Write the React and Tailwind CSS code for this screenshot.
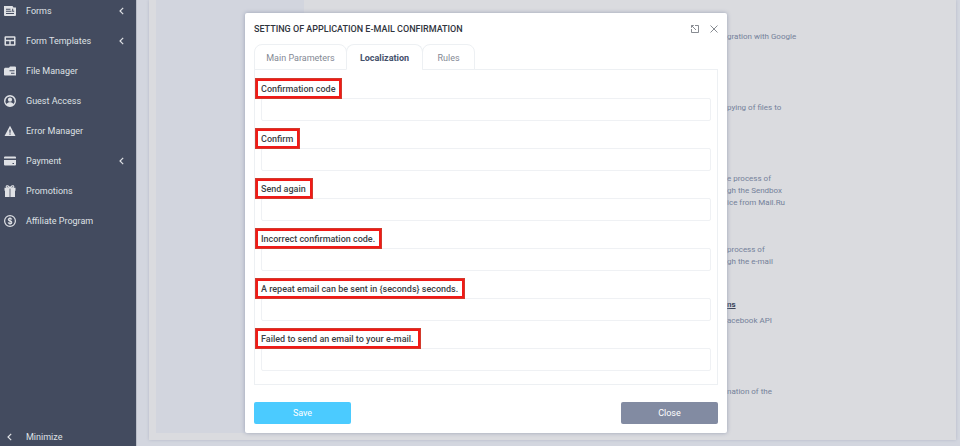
const menuItems = [
  { label: 'Forms', icon: FormsIcon, expandable: true },
  { label: 'Form Templates', icon: TemplatesIcon, expandable: true },
  { label: 'File Manager', icon: FolderIcon },
  { label: 'Guest Access', icon: GuestIcon },
  { label: 'Error Manager', icon: WarningIcon },
  { label: 'Payment', icon: CardIcon, expandable: true },
  { label: 'Promotions', icon: GiftIcon },
  { label: 'Affiliate Program', icon: DollarIcon },
];

const tabs = [
  { label: 'Main Parameters', width: 'w-[93px]' },
  { label: 'Localization', width: 'w-[77px]', active: true },
  { label: 'Rules', width: 'w-[53px]' },
];

const fields = [
  { id: 'confirmation-code', label: 'Confirmation code' },
  { id: 'confirm', label: 'Confirm' },
  { id: 'send-again', label: 'Send again' },
  { id: 'incorrect-code', label: 'Incorrect confirmation code.' },
  { id: 'repeat-email', label: 'A repeat email can be sent in {seconds} seconds.' },
  { id: 'failed-email', label: 'Failed to send an email to your e-mail.' },
];

const integrations = [
  { lines: ['gration with Google'] },
  { lines: ['pying of files to'] },
  { lines: ['e process of', 'gh the Sendbox', 'ice from Mail.Ru'] },
  { lines: ['process of', 'gh the e-mail'] },
  { title: 'ns', lines: ['acebook API'] },
  { lines: ['nation of the'] },
];

function Icon({ children }) {
  return (
    <svg viewBox="0 0 12 12" className="size-3 shrink-0" fill="currentColor" aria-hidden="true">
      {children}
    </svg>
  );
}

function FormsIcon() {
  return (
    <Icon>
      <path
        fillRule="evenodd"
        d="M0 1h8.500l1 1.500H12v7.500a1 1 0 0 1-1 1H1a1 1 0 0 1-1-1zM2 3.800v1h4.500v-1zM2 5.800v1h5.500v-1zM2 8v1h8V8zM8.200 3.800v3h2v-1h-1v-2z"
      />
    </Icon>
  );
}

function TemplatesIcon() {
  return (
    <Icon>
      <path
        fillRule="evenodd"
        d="M1.500 1.300h9a1 1 0 0 1 1 1v7.500a1 1 0 0 1-1 1h-9a1 1 0 0 1-1-1V2.300a1 1 0 0 1 1-1zM2 2.800v2h8v-2zM2 6.200v3.100h3.300V6.200zM6.700 6.200v3.100H10V6.200z"
      />
    </Icon>
  );
}

function FolderIcon() {
  return (
    <Icon>
      <path
        fillRule="evenodd"
        d="M0 3.800 1 2.800h4l1-1.300h5.300l.7.700v8.300H.6L0 10zM5.500 5.200v1h5v-1zM7 7.800v1h3.500v-1z"
      />
    </Icon>
  );
}

function GuestIcon() {
  return (
    <Icon>
      <path
        fillRule="evenodd"
        d="M6 0a6 6 0 1 1 0 12A6 6 0 0 1 6 0zm0 1.400a4.600 4.600 0 0 0-3.500 7.500C3.300 7.900 4.600 7.300 6 7.300s2.700.6 3.500 1.600A4.600 4.600 0 0 0 6 1.400z"
      />
      <circle cx="6" cy="4.700" r="2.100" />
    </Icon>
  );
}

function WarningIcon() {
  return (
    <Icon>
      <path fillRule="evenodd" d="M6 .8 11.500 11H.5zM5.400 4.500v3.200h1.200V4.500zM5.400 8.600v1.200h1.200V8.600z" />
    </Icon>
  );
}

function CardIcon() {
  return (
    <Icon>
      <path d="M1 1.500h10a1 1 0 0 1 1 1v1H0v-1a1 1 0 0 1 1-1z" />
      <path fillRule="evenodd" d="M0 5h12v4.500a1 1 0 0 1-1 1H1a1 1 0 0 1-1-1zM8.500 8v1h1.500V8z" />
    </Icon>
  );
}

function GiftIcon() {
  return (
    <Icon>
      <path d="M.5 2.800h5.100v3H.5zM6.400 2.800h5.100v3H6.400zM1 5.800h4.600V12H1zM6.400 5.800H11V12H6.400z" />
      <path
        d="M6 3C5 .8 2.500 0 2.200 1.600 2 2.800 4 3 6 3s4-.2 3.800-1.400C9.500 0 7 .8 6 3z"
        fill="none"
        stroke="currentColor"
        strokeWidth="1.100"
      />
    </Icon>
  );
}

function DollarIcon() {
  return (
    <Icon>
      <circle cx="6" cy="6" r="5.400" fill="none" stroke="currentColor" strokeWidth="1.200" />
      <path
        d="M7.800 4.500C7.600 3.700 7 3.300 6 3.300c-1.100 0-1.700.5-1.700 1.200C4.300 6.400 7.800 5.400 7.800 7.400c0 .8-.7 1.300-1.800 1.300S4.300 8.200 4.200 7.300M6 2.200v7.600"
        fill="none"
        stroke="currentColor"
        strokeWidth="1.100"
      />
    </Icon>
  );
}

function Chevron() {
  return (
    <svg viewBox="0 0 5 8" className="h-2 w-[5px]" fill="none" stroke="currentColor" strokeWidth="1.200" aria-hidden="true">
      <path d="M4.200.8 1 4l3.200 3.200" />
    </svg>
  );
}

function Sidebar() {
  return (
    <aside className="flex w-[137px] shrink-0 flex-col justify-between border-r border-[#babec8] bg-[#434b5f] pt-px text-[9px] leading-5 text-[#dfe1e5]">
      <nav className="flex flex-col gap-[10px]">
        {menuItems.map(({ label, icon: ItemIcon, expandable }) => (
          <a key={label} href="#" className="flex h-5 items-center gap-[10px] pr-3 pl-1">
            <ItemIcon />
            <span className="flex-1">{label}</span>
            {expandable && <Chevron />}
          </a>
        ))}
      </nav>
      <button type="button" className="flex h-[18px] items-center gap-[14px] pl-[7px] text-left">
        <Chevron />
        Minimize
      </button>
    </aside>
  );
}

function Integrations() {
  return (
    <main className="flex flex-1 bg-[#d3d6df] pr-1 pb-[6px] pl-3">
      <div className="flex flex-1 bg-[#dadbdf] pb-[7px] pl-[7px] shadow-[0_0_3px_#b4b9c8]">
        <div className="w-[148px] bg-[#d2d5de]" />
        <div className="flex-1 pt-[15px] pl-[423px] text-[8px] leading-3 text-[#74819a]">
          {integrations.map(({ title, lines }) => (
            <div key={lines.join()} className="h-[71px] last:h-auto">
              <h3 className="h-3 font-bold text-[#39435a] underline">{title}</h3>
              <p className="mt-1">
                {lines.map((line) => (
                  <span key={line} className="block">
                    {line}
                  </span>
                ))}
              </p>
            </div>
          ))}
        </div>
      </div>
    </main>
  );
}

function Field({ id, label }) {
  return (
    <div className="flex flex-col items-start">
      <label
        htmlFor={id}
        className="relative -ml-[6px] h-[21px] border-3 border-[#f01a17] pr-1 pl-[3px] text-[9px] leading-4 font-medium text-[#3c3f46] outline outline-[#d23a2c] -outline-offset-1"
      >
        {label}
      </label>
      <input id={id} type="text" className="-mt-px h-[23px] w-full rounded-xs border border-[#eff1f4] px-2 text-[9px]" />
    </div>
  );
}

function Modal() {
  return (
    <div
      role="dialog"
      aria-labelledby="dialog-title"
      className="rounded-xs bg-white px-[9px] pb-[9px] shadow-[0_0_4px_#9aa1b5]"
    >
      <div className="flex h-[31px] items-center justify-between">
        <h2 id="dialog-title" className="pt-0.5 text-[9px] font-medium text-[#30343d]">
          SETTING OF APPLICATION E-MAIL CONFIRMATION
        </h2>
        <div className="flex items-center gap-[11px] text-[#7b7f86]">
          <button type="button" aria-label="Expand">
            <svg viewBox="0 0 8 8" className="size-2" fill="none" stroke="currentColor">
              <path d="M4 .5h3.500v7h-7V4M.5 2.800V.5h2.300M.7.700 5 5" strokeWidth=".9" />
            </svg>
          </button>
          <button type="button" aria-label="Close dialog">
            <svg viewBox="0 0 8 8" className="size-2" fill="none" stroke="currentColor">
              <path d="m.5.5 7 7M7.500.5l-7 7" strokeWidth=".9" />
            </svg>
          </button>
        </div>
      </div>

      <div role="tablist" className="flex">
        {tabs.map(({ label, width, active }) => (
          <button
            key={label}
            type="button"
            role="tab"
            aria-selected={Boolean(active)}
            className={`relative -mb-px h-[26px] rounded-t-lg border border-[#edf0f3] bg-white pt-1 text-[9px] not-first:-ml-px ${width} ${
              active ? 'border-b-white font-bold text-[#44506b]' : 'text-[#848994]'
            }`}
          >
            {label}
          </button>
        ))}
      </div>

      <div role="tabpanel" className="flex flex-col gap-[7px] border border-[#edf0f3] px-[6px] pt-2 pb-[13px]">
        {fields.map((field) => (
          <Field key={field.id} {...field} />
        ))}
      </div>

      <div className="mt-[17px] flex justify-between text-[9px] text-white">
        <button type="button" className="h-[22px] w-[97px] rounded-xs bg-[#4bcbff] pt-0.5">
          Save
        </button>
        <button type="button" className="h-[22px] w-[97px] rounded-xs bg-[#828ba2] pt-0.5">
          Close
        </button>
      </div>
    </div>
  );
}

function App() {
  return (
    <div className="relative flex min-h-screen font-[Roboto,sans-serif]">
      <Sidebar />
      <Integrations />
      <div className="absolute inset-x-0 top-0 pt-[13px] pr-[233px] pl-[245px]">
        <Modal />
      </div>
    </div>
  );
}

export default App;
